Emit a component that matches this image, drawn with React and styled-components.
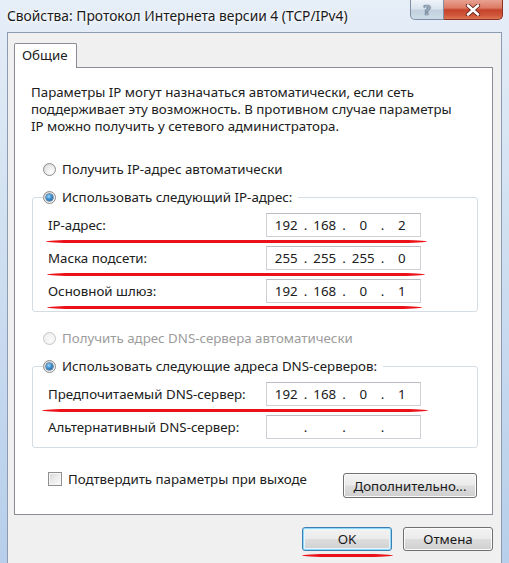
import React from "react";
import styled, { createGlobalStyle, css } from "styled-components";

const Global = createGlobalStyle`
  html, body { margin: 0; padding: 0; }
  body {
    width: 509px; height: 563px; overflow: hidden;
    font-family: "Noto Sans", "Open Sans", sans-serif;
    font-size: 13.3px; color: #202020;
  }
  * { box-sizing: border-box; }
`;

const Window = styled.div`
  width: 509px; height: 563px;
  display: flex; flex-direction: column;
  background: linear-gradient(180deg, #e6eef8 0%, #d8e5f3 25%, #c3d7ee 70%, #b7cfea 100%);
`;

const TitleBar = styled.div`
  height: 32px; flex: none;
  display: flex; align-items: flex-start;
  padding: 0 6px 0 7px;
`;

const Title = styled.div`
  flex: 1; min-width: 0;
  margin-top: 6px;
  line-height: 20px;
  font-size: 13.8px;
  color: #1a1a1a;
  white-space: nowrap;
  text-shadow: 0 0 6px #ffffff, 0 0 3px #ffffff;
`;

const Controls = styled.div`
  flex: none;
  width: 93px; height: 20px;
  display: grid;
  grid-template-columns: 34px 59px;
`;

const HelpButton = styled.div`
  display: flex; align-items: center; justify-content: center;
  border: 1px solid #7f8fa4; border-top: 0;
  border-radius: 0 0 0 5px;
  background-color: #d6dfe9;
  background-image: linear-gradient(180deg, #eef3f8 0%, #dbe4ee 45%, #c3d0df 55%, #cddae7 100%);
`;

const CloseButton = styled.div`
  display: flex; align-items: center; justify-content: center;
  border: 1px solid #8c3325; border-top: 0; border-left: 0;
  border-radius: 0 0 5px 0;
  background: #c9492f linear-gradient(180deg, #e8a191 0%, #dc7a64 42%, #c5422b 52%, #cf563b 80%, #de7652 100%);
`;

const HelpGlyph = styled.span`
  font-family: "DejaVu Sans", sans-serif;
  font-weight: bold; font-size: 14px; line-height: 1;
  color: #9aabbd;
  text-shadow: 0 0 1px #44546a, 0 0 1px #44546a;
`;

const Client = styled.div`
  flex: 1;
  margin: 0 7px;
  background: #f0f0f0;
  border: 1px solid #8c9bb0; border-bottom: none;
  padding: 10px 8px 0 6px;
  display: flex; flex-direction: column;
`;

const Tab = styled.div`
  align-self: flex-start;
  position: relative; z-index: 1;
  width: 63px; height: 25px;
  margin-bottom: -1px;
  border: 1px solid #898c95; border-bottom: none;
  border-radius: 2px 2px 0 0;
  background: #fff;
  padding-left: 7px;
  line-height: 23px;
`;

const Panel = styled.div`
  height: 448px;
  border: 1px solid #898c95;
  background: #fff;
  padding: 16px 14px 0 17px;
  display: flex; flex-direction: column;
`;

const Intro = styled.p`
  margin: 0 0 0 -1px;
  line-height: 17px;
`;

const RadioRow = styled.div`
  height: 20px;
  display: flex; align-items: center; gap: 6px;
  padding-left: ${(p) => (p.$inLegend ? 0 : 11)}px;
  margin-top: ${(p) => p.$mt || 0}px;
  color: ${(p) => (p.$disabled ? "#9c9c9c" : "inherit")};
  white-space: nowrap;
`;

const Radio = styled.span`
  position: relative;
  width: 13px; height: 13px; flex: none;
  border-radius: 50%;
  border: 1px solid ${(p) => (p.$disabled ? "#c6c6c6" : "#8a8c8f")};
  background: ${(p) => p.$disabled
    ? "radial-gradient(circle at 60% 65%, #fafafa 0%, #ececec 100%)"
    : "radial-gradient(circle at 65% 70%, #ffffff 0%, #e8e8e8 55%, #cfcfcf 100%)"};
  ${(p) => p.$checked && css`
    &::after {
      content: "";
      position: absolute; left: 2px; top: 2px;
      width: 7px; height: 7px; border-radius: 50%;
      background: radial-gradient(circle at 40% 35%, #9bd8ff 0%, #3b8ccc 45%, #1d4f7e 100%);
      box-shadow: 0 0 0 0.5px #1c4566;
    }
  `}
`;

const Group = styled.fieldset`
  margin: ${(p) => p.$mt || 0}px 0 0 0;
  padding: 0;
  min-width: 0;
  border: 1px solid #d5dde4;
  border-radius: 3px;
`;

const Legend = styled.legend`
  margin-left: 10px;
  padding: 0 6px 0 0;
`;

const GroupBody = styled.div`
  padding: 6px 0 8px 15px;
  display: flex; flex-direction: column; gap: 9px;
`;

const FieldRow = styled.div`
  position: relative;
  height: 24px;
  display: flex; align-items: center;
`;

const FieldLabel = styled.span`
  width: 218px; flex: none;
  white-space: nowrap;
`;

const IpBox = styled.div`
  width: 155px; height: 24px;
  border: 1px solid #cdd1d6;
  border-top-color: #b9bdc3;
  background: #fff;
  display: flex; align-items: center;
  padding: 0 1px 0 2px;
`;

const Octet = styled.span`
  flex: 1;
  text-align: center;
`;

const Dot = styled.span`
  width: 4px; flex: none;
  text-align: center;
`;

const Mark = styled.span`
  position: absolute;
  top: calc(100% + 3px);
  left: ${(p) => p.$left}px;
  width: ${(p) => p.$width}px;
  height: 3px;
  border-radius: 30px / 1.5px;
  background: #ea1119;
  pointer-events: none;
`;

const BottomRow = styled.div`
  margin-top: 25px;
  display: flex; align-items: flex-start;
`;

const CheckRow = styled.label`
  margin: -2px 0 0 16px;
  display: flex; align-items: center; gap: 6px;
  height: 16px;
`;

const CheckBox = styled.span`
  width: 14px; height: 14px; flex: none;
  border: 1px solid #8e8f8f;
  background: linear-gradient(135deg, #d6d6d6 0%, #ececec 50%, #fbfbfb 100%);
  box-shadow: inset 0 0 0 1px #f6f6f6;
`;

const Button = styled.div`
  position: relative;
  height: ${(p) => p.$h || 24}px;
  width: ${(p) => p.$w}px;
  margin-left: ${(p) => (p.$push ? "auto" : 0)};
  margin-right: ${(p) => p.$mr || 0}px;
  border: 1px solid #707070;
  border-radius: 3px;
  background: linear-gradient(180deg, #f3f3f3 0%, #ebebeb 48%, #dddddd 52%, #cfcfcf 100%);
  box-shadow: inset 0 0 0 1px #fbfbfb;
  display: flex; align-items: center; justify-content: center;
  color: #1a1a1a;
  ${(p) => p.$default && css`
    border-color: #3c7fb1;
    box-shadow: inset 0 0 0 1px #8fd7f7, inset 0 0 0 2px #e5f5fd;
  `}
`;

const Footer = styled.div`
  margin-top: 12px;
  display: flex; justify-content: flex-end; gap: 11px;
`;

const ButtonMark = styled(Mark)`
  top: calc(100% + 4px);
`;

const Ip = ({ value }) => {
  const parts = value ? value.split(".") : ["", "", "", ""];
  return (
    <IpBox>
      {parts.map((p, i) => (
        <React.Fragment key={i}>
          {i > 0 && <Dot>.</Dot>}
          <Octet>{p}</Octet>
        </React.Fragment>
      ))}
    </IpBox>
  );
};

const Field = ({ label, value, mark }) => (
  <FieldRow>
    <FieldLabel>{label}</FieldLabel>
    <Ip value={value} />
    {mark && <Mark $left={mark[0]} $width={mark[1]} />}
  </FieldRow>
);

const CloseIcon = () => (
  <svg width="16" height="12" viewBox="0 0 16 12">
    <path d="M3 1.5 L13 10.5 M13 1.5 L3 10.5" stroke="#5a1d14" strokeWidth="4.2" strokeLinecap="round" />
    <path d="M3 1.5 L13 10.5 M13 1.5 L3 10.5" stroke="#ffffff" strokeWidth="2.6" strokeLinecap="round" />
  </svg>
);

export default function App() {
  return (
    <>
      <Global />
      <Window>
        <TitleBar>
          <Title>Свойства: Протокол Интернета версии 4 (TCP/IPv4)</Title>
          <Controls>
            <HelpButton><HelpGlyph>?</HelpGlyph></HelpButton>
            <CloseButton><CloseIcon /></CloseButton>
          </Controls>
        </TitleBar>
        <Client>
          <Tab>Общие</Tab>
          <Panel>
            <Intro>
              Параметры IP могут назначаться автоматически, если сеть<br />
              поддерживает эту возможность. В противном случае параметры<br />
              IP можно получить у сетевого администратора.
            </Intro>
            <RadioRow $mt={24}>
              <Radio />
              Получить IP-адрес автоматически
            </RadioRow>
            <Group $mt={8}>
              <Legend>
                <RadioRow $inLegend>
                  <Radio $checked />
                  Использовать следующий IP-адрес:
                </RadioRow>
              </Legend>
              <GroupBody>
                <Field label="IP-адрес:" value="192.168.0.2" mark={[-2, 381]} />
                <Field label="Маска подсети:" value="255.255.255.0" mark={[-1, 378]} />
                <Field label="Основной шлюз:" value="192.168.0.1" mark={[-1, 375]} />
              </GroupBody>
            </Group>
            <RadioRow $mt={16} $disabled>
              <Radio $disabled />
              Получить адрес DNS-сервера автоматически
            </RadioRow>
            <Group $mt={8}>
              <Legend>
                <RadioRow $inLegend>
                  <Radio $checked />
                  Использовать следующие адреса DNS-серверов:
                </RadioRow>
              </Legend>
              <GroupBody>
                <Field label="Предпочитаемый DNS-сервер:" value="192.168.0.1" mark={[-6, 386]} />
                <Field label="Альтернативный DNS-сервер:" value="" />
              </GroupBody>
            </Group>
            <BottomRow>
              <CheckRow>
                <CheckBox />
                Подтвердить параметры при выходе
              </CheckRow>
              <Button $w={134} $h={25} $push $mr={1}>Дополнительно...</Button>
            </BottomRow>
          </Panel>
          <Footer>
            <Button $w={90} $default>
              OK
              <ButtonMark $left={-1} $width={91} />
            </Button>
            <Button $w={90}>Отмена</Button>
          </Footer>
        </Client>
      </Window>
    </>
  );
}
